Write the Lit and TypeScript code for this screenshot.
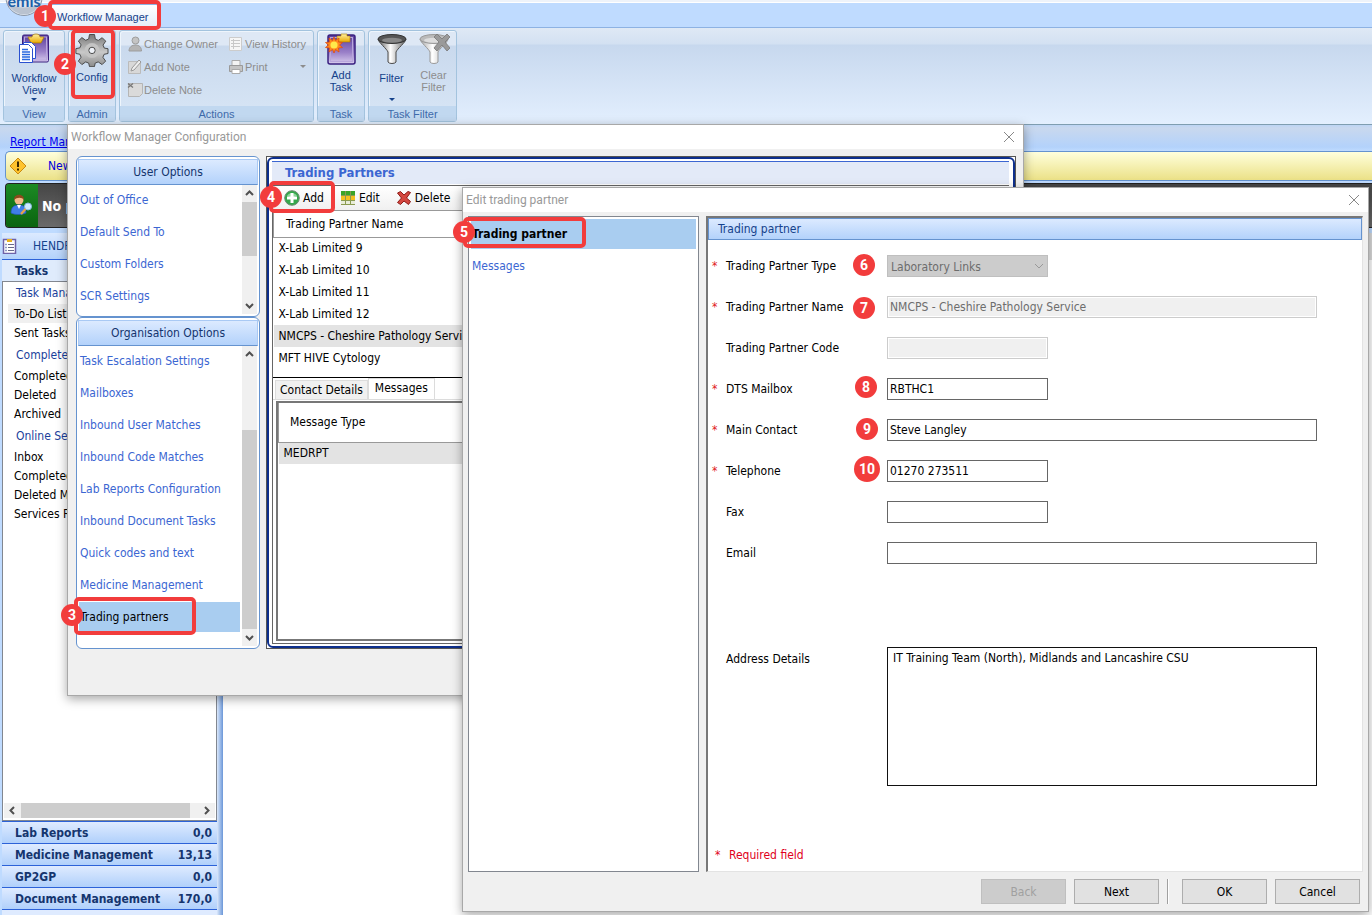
import { LitElement, html, css, svg, nothing } from "lit";
import { customElement, state } from "lit/decorators.js";
import { classMap } from "lit/directives/class-map.js";
import { styleMap } from "lit/directives/style-map.js";

type NavEntry = { text: string; heading?: boolean; selected?: boolean };
type Field = {
  id: string;
  label: string;
  value?: string;
  required?: boolean;
  wide?: boolean;
  disabled?: boolean;
  options?: string[];
};
type Callout = { n: number; x: number; y: number; box?: [number, number, number, number] };

const NAV: NavEntry[] = [
  { text: "Task Manager", heading: true },
  { text: "To-Do List", selected: true },
  { text: "Sent Tasks" },
  { text: "Completed", heading: true },
  { text: "Completed" },
  { text: "Deleted" },
  { text: "Archived" },
  { text: "Online Serv", heading: true },
  { text: "Inbox" },
  { text: "Completed" },
  { text: "Deleted Ma" },
  { text: "Services Rx" },
];

const MODULES: [string, string][] = [
  ["Lab Reports", "0,0"],
  ["Medicine Management", "13,13"],
  ["GP2GP", "0,0"],
  ["Document Management", "170,0"],
];

const USER_OPTIONS = ["Out of Office", "Default Send To", "Custom Folders", "SCR Settings"];
const ORG_OPTIONS = [
  "Task Escalation Settings",
  "Mailboxes",
  "Inbound User Matches",
  "Inbound Code Matches",
  "Lab Reports Configuration",
  "Inbound Document Tasks",
  "Quick codes and text",
  "Medicine Management",
  "Trading partners",
];

const PARTNERS = [
  "X-Lab Limited 9",
  "X-Lab Limited 10",
  "X-Lab Limited 11",
  "X-Lab Limited 12",
  "NMCPS - Cheshire Pathology Service",
  "MFT HIVE Cytology",
];

const FIELDS: Field[] = [
  { id: "type", label: "Trading Partner Type", required: true, disabled: true, options: ["Laboratory Links"] },
  { id: "name", label: "Trading Partner Name", required: true, disabled: true, wide: true, value: "NMCPS - Cheshire Pathology Service" },
  { id: "code", label: "Trading Partner Code", disabled: true },
  { id: "dts", label: "DTS Mailbox", required: true, value: "RBTHC1" },
  { id: "contact", label: "Main Contact", required: true, wide: true, value: "Steve Langley" },
  { id: "phone", label: "Telephone", required: true, value: "01270 273511" },
  { id: "fax", label: "Fax" },
  { id: "email", label: "Email", wide: true },
];

const CALLOUTS: Callout[] = [
  { n: 1, x: 45, y: 16, box: [48, 0, 113, 30] },
  { n: 2, x: 65, y: 64, box: [71, 29, 44, 70] },
  { n: 3, x: 72, y: 615, box: [74, 597, 122, 38] },
  { n: 4, x: 271, y: 197, box: [269, 181, 66, 32] },
  { n: 5, x: 464, y: 232, box: [463, 217, 123, 31] },
  { n: 6, x: 864, y: 265 },
  { n: 7, x: 864, y: 308 },
  { n: 8, x: 866, y: 387 },
  { n: 9, x: 867, y: 429 },
  { n: 10, x: 867, y: 469 },
];

const icon = (size: number, body: unknown) =>
  html`<svg class="icon" width=${size} height=${size} viewBox="0 0 ${size} ${size}" aria-hidden="true">${body}</svg>`;

const clipboard = svg`
  <linearGradient id="purple" x1="0" y1="0" x2="0" y2="1">
    <stop offset="0" stop-color="#5a3c9c"/><stop offset=".6" stop-color="#9a80c8"/><stop offset="1" stop-color="#d9cdee"/>
  </linearGradient>
  <linearGradient id="gold" x1="0" y1="0" x2="0" y2="1">
    <stop offset="0" stop-color="#fff0a0"/><stop offset="1" stop-color="#e8a800"/>
  </linearGradient>`;

const workflowIcon = icon(32, svg`${clipboard}
  <rect x="4.500" y="2" width="26" height="27" rx="1.500" fill="url(#purple)" stroke="#3a2080"/>
  <rect x="6.500" y="4" width="22" height="23" fill="none" stroke="#b8a6dc"/>
  <path d="M10 4h4c0-4 8-4 8 0h4l-3 6h-10z" fill="url(#gold)" stroke="#a87800" stroke-width=".7"/>
  <path d="M5.500 9.500h8l4 4v12h-12z" fill="#fff" stroke="#2a50d0"/>
  <path d="M1.500 11.500h9l4 4v14h-13z" fill="#fff" stroke="#2a50d0"/>
  <path d="M4 16.500h6M4 19h8M4 21.500h8M4 24h8M4 26.500h8" stroke="#2a6ae0" stroke-width="1.300"/>`);

const gearIcon = icon(34, svg`
  <linearGradient id="steel" x1="0" y1="0" x2="0" y2="1">
    <stop offset="0" stop-color="#777"/><stop offset=".55" stop-color="#c9c9c9"/><stop offset="1" stop-color="#8a8a8a"/>
  </linearGradient>
  <g fill="url(#steel)" stroke="#4c4c4c" stroke-width="1">
    <path fill-rule="evenodd" d="M14.500 1.500h5l.8 4.600 3 1.300 3.900-2.700 3.500 3.500-2.700 3.900 1.300 3 3.700.6v4.800l-3.900.8-1.200 3 2.700 3.800-3.500 3.500-3.900-2.700-3 1.200-.8 3.600h-4.900l-.8-3.600-3-1.200-3.800 2.700-3.500-3.500 2.700-3.900-1.300-3-3.900-.7v-4.900l3.900-.7 1.300-3-2.700-3.900 3.500-3.400 3.800 2.700 3-1.300zM17 11.200a6.200 6.200 0 1 0 0 12.400 6.200 6.200 0 0 0 0-12.400z"/>
    <circle cx="17" cy="17.400" r="7.400" fill="#c4c4c4" stroke="none"/>
    <circle cx="17" cy="17.400" r="3.200" fill="#eef2f8"/>
  </g>`);

const addTaskIcon = icon(32, svg`${clipboard}
  <rect x="3" y="2" width="27" height="29" rx="2" fill="url(#purple)" stroke="#3a2080" stroke-width="1.500"/>
  <rect x="5.500" y="4.500" width="22" height="24" fill="none" stroke="#b8a6dc"/>
  <path d="M12 3h4V1h6v2h3v6H12z" fill="url(#gold)" stroke="#a87800" stroke-width=".6"/>
  <path d="M9 4l1.500 3.500L14 5l-.5 4 4 .5-3 2.500 3 2.500-4 .5.5 4-3.500-2.500L9 20l-1.500-3.500L4 19l.5-4-4-.5 3-2.500-3-2.500 4-.5L4 5l3.500 2.500z" fill="#ff8a1c" stroke="#e04a10" stroke-width=".8"/>
  <circle cx="9" cy="12" r="3.600" fill="#ffe94a"/>`);

const funnel = (faded: boolean) => svg`
  <linearGradient id=${faded ? "fun2" : "fun1"} x1="0" y1="0" x2="1" y2="0">
    <stop offset="0" stop-color=${faded ? "#a8a8a8" : "#555"}/><stop offset=".45" stop-color="#fff"/><stop offset="1" stop-color=${faded ? "#a8a8a8" : "#666"}/>
  </linearGradient>
  <path d="M2 6c0 3 9 10 10 13v10c1 2 7 2 8 0V19c1-3 10-10 10-13z" fill=${faded ? "url(#fun2)" : "url(#fun1)"} stroke=${faded ? "#999" : "#4a4a4a"}/>
  <ellipse cx="16" cy="6" rx="14" ry="4.500" fill=${faded ? "#bbb" : "#555"} stroke=${faded ? "#999" : "#333"}/>
  <ellipse cx="16" cy="7.200" rx="10" ry="2.500" fill=${faded ? "#ddd" : "#888"}/>`;

const filterIcon = icon(32, funnel(false));
const clearFilterIcon = icon(32, svg`${funnel(true)}
  <path d="M16 4l3-3 5 5 5-5 3 3-5 5 5 6-3 3-5-6-5 6-3-3 5-6z" fill="#9a9a9a" stroke="#777" stroke-width=".8"/>`);

const personIcon = icon(16, svg`<circle cx="8.500" cy="4.500" r="3.500" fill="#c4c4c4" stroke="#9d9d9d"/>
  <path d="M2 15c0-4 3-6 6.500-6s6 2 6 6z" fill="#b4b4b4" stroke="#9d9d9d"/>`);
const noteIcon = icon(16, svg`<path d="M1.500 2.500h12v12h-12z" fill="#d8d8d8" stroke="#bbb"/>
  <path d="M4 12l1-3 7-8 2 2-7 8z" fill="#eee" stroke="#999"/>`);
const deleteNoteIcon = icon(16, svg`<path d="M1.500 1.500h14v10l-3 3h-11z" fill="#dadada" stroke="#b5b5b5"/>
  <path d="M1 1.500l5 4M6 1.500L1 5.500" stroke="#777" stroke-width="1.300"/>`);
const historyIcon = icon(16, svg`<path d="M1.500 1.500h12v13h-12z" fill="#f6f6f6" stroke="#ccc"/>
  <path d="M3 4.500h9M3 7.500h9M3 10.500h9M5.500 3v10" stroke="#c8c8c8"/>`);
const printIcon = icon(16, svg`<path d="M4 1.500h8v5H4z" fill="#f4f4f4" stroke="#aaa"/>
  <path d="M1.500 6.500h13v6h-13z" fill="#c4c4c4" stroke="#9a9a9a"/>
  <path d="M4 10.500h8v4H4z" fill="#fff" stroke="#aaa"/>`);

const warnIcon = icon(18, svg`<path d="M9 1l8 8-8 8-8-8z" fill="#ffc32c" stroke="#c98a10"/>
  <path d="M9 4.500v5.500M9 11.500v2" stroke="#3a2a00" stroke-width="2"/>`);
const patientIcon = icon(24, svg`<circle cx="9" cy="6" r="4.500" fill="#f3b98a"/>
  <path d="M4 6c-.5-7 10.500-7 10 0-2-3-7-3-10 0z" fill="#8a4a1c"/>
  <path d="M1 19c0-6 3-8 8-8s7 2 7 8c-4 2-11 2-15 0z" fill="#3f7ee8" stroke="#2456b8" stroke-width=".7"/>
  <path d="M7 11l2 4 2-4z" fill="#fff"/>
  <circle cx="18" cy="12.500" r="3.500" fill="#cfeaff" stroke="#8abbe8"/>
  <path d="M15.500 15L11 20" stroke="#e8a24a" stroke-width="2.200"/>`);
const listIcon = icon(16, svg`<rect x="1.500" y="1.500" width="12" height="14" fill="#fff" stroke="#6e62a8" stroke-width="1.500"/>
  <path d="M5 1h5v3H5z" fill="#e9b320"/>
  <path d="M6 6.500h6M6 9.500h6M6 12.500h6" stroke="#6a6a8a"/><path d="M3.500 6.500h1M3.500 9.500h1M3.500 12.500h1" stroke="#223a90" stroke-width="1.500"/>`);

const addIcon = icon(16, svg`<circle cx="8" cy="8" r="7.300" fill="#35a84b" stroke="#6a8a70"/>
  <path d="M3 5.500a6 5 0 0 1 10 0c-3 2-7 2-10 0z" fill="#8fd69b"/>
  <path d="M6.500 3h3v3.500H13v3H9.500V13h-3V9.500H3v-3h3.500z" fill="#fff"/>`);
const editIcon = icon(16, svg`<path d="M1 1h14v4H1z" fill="#3aa428"/><path d="M1 6h14v4H1z" fill="#f4c020"/>
  <path d="M1 10h14v5H1z" fill="#e8ecd8"/><path d="M1 5.500h14M1 10.500h14M1 14.500h14M5.500 1v14M10.500 1v14" stroke="#8a9a50"/>`);
const deleteIcon = icon(16, svg`<path d="M1.500 3l3-1.500L8 5l4-3.500 2.500 1L10.500 8l4 3.500-2 3L8 11l-3.500 3.500-3-2L5.500 8z" fill="#d4473f" stroke="#8e1a16"/>`);

const chevron = (dir: "up" | "down" | "left" | "right") => {
  const d = { up: "M2 7l3.500-3.500L9 7", down: "M2 4l3.500 3.500L9 4", left: "M7 2L3.500 5.500 7 9", right: "M4 2l3.500 3.500L4 9" }[dir];
  return html`<svg class="chev" width="11" height="11" viewBox="0 0 11 11" aria-hidden="true"><path d=${d} fill="none" stroke="#505050" stroke-width="2"/></svg>`;
};
const closeGlyph = svg`<svg width="12" height="12" viewBox="0 0 12 12" aria-hidden="true"><path d="M1 1l10 10M11 1L1 11" stroke="#888" stroke-width="1"/></svg>`;

@customElement("app-root")
export class AppRoot extends LitElement {
  @state() private orgOption = "Trading partners";
  @state() private partner = 4;

  static styles = css`
    :host {
      display: block;
      position: relative;
      height: 100vh;
      overflow: hidden;
      background: #bfdbff;
      font: 12px/16px "DejaVu Sans Condensed", "DejaVu Sans", sans-serif;
      color: #000;
    }
    * { box-sizing: border-box; }
    button, input, select, textarea { font: inherit; color: inherit; margin: 0; }
    button { border: 0; background: none; padding: 0; text-align: left; }
    ul { list-style: none; margin: 0; padding: 0; }
    h1, h2 { margin: 0; font: inherit; }
    svg { display: block; flex: none; }
    .grow { flex: 1; min-width: 0; }

    .desktop { display: flex; flex-direction: column; height: 100%; }

    /* ribbon */
    .tabs {
      position: relative; flex: none; height: 28px; padding: 4px 0 0 50px;
      background: linear-gradient(#eef3fa 0 2px, #fff 2px 3px, #bfdbff 3px);
      border-bottom: 1px solid #8db2e3;
    }
    .tab {
      display: block; height: 24px; padding: 0 9px 0 6px; color: #15428b; font: 11px/24px "Liberation Sans", sans-serif;
      background: linear-gradient(#fff, #e3ecf8); border: 1px solid #8db2e3; border-bottom: 0; border-radius: 3px 3px 0 0;
    }
    .orb { position: absolute; left: 5px; top: -21px; }
    .ribbon {
      flex: none; display: flex; gap: 3px; height: 97px; padding: 2px 3px; font: 11px/12px "Liberation Sans", sans-serif; color: #15428b;
      background: linear-gradient(#dfe9f5 0, #d3e1f2 16px, #c7d8ee 17px, #e3effe 96px);
      border-bottom: 1px solid #7f9db0;
    }
    .group {
      display: flex; flex-direction: column; border: 1px solid #a3c3de; border-radius: 3px;
      background: linear-gradient(#dee8f5 0 14px, #c9d9ed 15px, #d8e6f6);
      box-shadow: inset 1px 1px 0 #eef5fc;
    }
    .group > footer { height: 15px; line-height: 16px; text-align: center; color: #3e6aaa; background: #c1d8f0; }
    .group .body { flex: 1; display: flex; justify-content: center; }
    .view { width: 62px; } .admin { width: 48px; } .actions { width: 195px; } .task { width: 48px; } .filters { width: 89px; }
    .big { display: flex; flex-direction: column; align-items: center; width: 42px; padding-top: 2px; text-align: center; }
    .view .big { width: 60px; }
    .big .cap { padding-top: 4px; }
    .big.drop .cap { padding-top: 7px; min-height: 31px; }
    .arrow { width: 0; height: 0; border: 3px solid transparent; border-top-color: currentColor; border-bottom: 0; margin-top: 2px; }
    .off { color: #8d8d8d; }
    .actions .body { display: grid; grid-template-columns: 101px 1fr; grid-auto-rows: 23px; padding: 1px 8px; }
    .small { display: flex; align-items: center; gap: 1px; white-space: nowrap; }
    .small .arrow { margin: 0 0 0 auto; }

    /* strips under the ribbon */
    .crumbs { flex: none; height: 26px; padding: 9px 10px 0; background: linear-gradient(#bcd4f4, #c9d8ee 3px, #b3d2fb 22px, #bfdbff); }
    .crumbs a { color: #0000f0; }
    .alert {
      flex: none; height: 30px; margin-left: 5px; padding-left: 3px; display: flex; align-items: center; gap: 21px; color: #0000e0;
      border: 1px solid #6593cf; border-right: 0; border-radius: 5px 0 0 5px; background: linear-gradient(#ffffdc, #ebe187);
    }
    .patient {
      flex: none; height: 45px; margin: 2px 0 5px 5px; display: flex; color: #fff; font-size: 14px; font-weight: 700;
      border: 1px solid #222; border-right: 0; border-radius: 4px 0 0 4px; overflow: hidden; background: linear-gradient(#464646, #6a6a6a);
    }
    .patient .tile { display: grid; place-items: center; width: 32px; background: linear-gradient(#1c8a24, #0a6410); }
    .patient .name { padding: 14px 4px; }

    .work { flex: 1; min-height: 0; display: flex; padding-left: 2px; }
    .side { width: 215px; display: flex; flex-direction: column; }
    .who { flex: none; display: flex; align-items: center; gap: 15px; height: 27px; color: #15428b; background: linear-gradient(#dceaff, #b3d2fb); border-bottom: 1px solid #2c62d8; }
    .tasks { flex: none; height: 21px; padding-left: 13px; font-weight: 700; line-height: 22px; color: #15356e; background: #dfebfc; }
    .tree { flex: 1; min-height: 0; display: flex; flex-direction: column; border: 1px solid #828790; background: #fff; }
    .tree li { height: 19px; line-height: 20px; padding-left: 6px; margin-left: 5px; white-space: nowrap; }
    .tree li.heading { height: 22px; line-height: 22px; margin-top: 2px; padding-left: 8px; color: #1a3f9c; }
    .tree li.heading:first-child { margin-top: 0; }
    .tree li.selected { background: #f0f0f0; }
    .hbar { display: flex; align-items: center; height: 15px; margin: 0 1px 2px; background: #f0f0f0; }
    .hbar .chev { margin: 0 3px; }
    .hbar .thumb { width: 169px; height: 15px; background: #cdcdcd; margin-right: auto; }
    .module {
      flex: none; display: flex; justify-content: space-between; width: 100%; height: 22px; padding: 0 5px 0 13px; line-height: 22px; font-weight: 700;
      color: #15356e; border-top: 1px solid #2c62d8; background: linear-gradient(#dfebff, #b0d0fb);
    }
    .more { flex: none; height: 6px; border-top: 1px solid #2c62d8; background: #dfebff; }
    .split { width: 6px; background: linear-gradient(90deg, #dbe8fb, #6b97d8); }
    .content { background: #fff; border-top: 27px solid #dcdcdc; }

    /* dialogs */
    .dialog { position: absolute; display: flex; flex-direction: column; background: #f0f0f0; border: 1px solid #a8a8a8; box-shadow: 0 3px 10px rgba(0, 0, 0, .35); }
    .config { left: 67px; top: 124px; right: 348px; height: 572px; }
    .edit { inset: 187px 3px 3px 462px; }
    .title {
      flex: none; height: 24px; padding: 0 8px 0 3px; display: flex; align-items: center; justify-content: space-between;
      background: #fff; color: #999; font-family: Roboto, sans-serif;
    }
    .config-body { display: flex; gap: 6px; height: 493px; margin: 7px 7px 0 8px; }
    .options { width: 184px; display: flex; flex-direction: column; }
    .box { display: flex; flex-direction: column; padding: 2px 1px; border: 1px solid #6593cf; border-radius: 6px; background: #fff; }
    .box.user { height: 161px; }
    .box.org { flex: 1; min-height: 0; }
    .box h2 { flex: none; height: 26px; line-height: 25px; text-align: center; color: #15356e; background: linear-gradient(#dceaff, #b3d2fb); border: 1px solid #a9c9f4; border-bottom-color: #6593cf; }
    .box .scroll { flex: 1; min-height: 0; display: flex; overflow: hidden; }
    .box ul { flex: 1; display: flex; flex-direction: column; gap: 2px; padding: 0 2px 0 1px; }
    .opt { display: block; width: 100%; height: 30px; line-height: 30px; padding-left: 1px; color: #3b66d2; white-space: nowrap; }
    .opt.on { color: #000; background: #a9cdf0; }
    .vbar { display: flex; flex-direction: column; align-items: center; width: 15px; margin-right: 1px; background: #f0f0f0; }
    .vbar .chev { margin: 3px 0; }
    .vbar .thumb { width: 15px; background: #cdcdcd; }

    .panel { display: flex; flex-direction: column; border: 1px solid #555; background: #fff; }
    .panel .inner { flex: 1; display: flex; flex-direction: column; padding: 2px 4px 2px 3px; border: 2px solid #0e2f8c; border-radius: 6px; }
    .panel h2 { height: 23px; line-height: 22px; padding-left: 13px; font-size: 13px; font-weight: 700; color: #3b66d2; background: #e3eaf8; border-top: 1px solid #3b66d2; }
    .sheet { flex: 1; display: flex; flex-direction: column; margin-top: 1px; border: 1px solid #666; border-right: 0; }
    .tools { display: flex; gap: 16px; height: 25px; padding-left: 11px; background: linear-gradient(#fff, #f0f0f0); border-bottom: 1px solid #999; }
    .tool { display: flex; align-items: center; gap: 3px; }
    table { border-collapse: collapse; width: 100%; }
    th { font-weight: 400; text-align: left; border: 1px solid #999; border-top: 0; }
    td { height: 22px; padding: 0 5px; }
    tr.on td { background: #e3e3e3; }
    .partners { flex: none; height: 167px; border-bottom: 1px solid #000; }
    .partners th { height: 26px; padding: 0 12px; }
    .tabrow { display: flex; align-items: flex-end; height: 22px; padding-left: 2px; border-bottom: 1px solid #dcdcdc; }
    .subtab { height: 19px; padding: 0 4px; border: 1px solid #dcdcdc; border-bottom: 0; background: #f0f0f0; }
    .subtab.on { height: 21px; padding: 0 6px 3px; background: #fff; }
    .messages { flex: 1; margin: 1px 0 2px 3px; border: 2px solid #777; border-right: 0; }
    .messages th { height: 39px; padding: 0 11px; }

    .edit-body { flex: 1; min-height: 0; display: flex; gap: 7px; padding: 4px 5px 0; }
    .steps { width: 231px; padding: 2px; background: #fff; border: 1px solid #828790; }
    .step { display: block; width: 100%; height: 30px; line-height: 30px; margin-bottom: 2px; padding-left: 1px; color: #3b66d2; }
    .step.on { color: #000; font-weight: 700; background: #a9cdf0; }
    .form { display: flex; flex-direction: column; background: #fff; border: 2px solid #777; border-right: 1px solid #e3e3e3; border-bottom: 1px solid #e3e3e3; }
    .form h2 { height: 22px; line-height: 20px; padding-left: 9px; color: #15428b; border: 1px solid #6593cf; background: linear-gradient(#dceaff, #b3d2fb); }
    .fields { flex: 1; padding: 15px 45px 0 4px; display: flex; flex-direction: column; gap: 19px; }
    .row { display: flex; line-height: 22px; }
    .star { width: 14px; color: #e02020; }
    .row label { width: 161px; }
    .row input, .row select { width: 161px; height: 22px; padding: 0 2px; border: 1px solid #666; border-radius: 0; background: #fff; outline: 0; }
    .row input.wide { flex: 1; }
    .row input:disabled { color: #6d6d6d; background: #f0f0f0; border-color: #ccc; box-shadow: inset 0 0 0 1px #fff; }
    .pick { display: flex; position: relative; }
    .row select:disabled { appearance: none; opacity: 1; color: #6d6d6d; background: #ccc; border-color: #bfbfbf; padding: 0 3px; }
    .pick svg { position: absolute; right: 4px; top: 8px; }
    .address { margin-top: 64px; }
    .address label { padding-top: 1px; }
    textarea { flex: 1; height: 139px; padding: 2px 5px; line-height: 16px; border: 1px solid #111; border-radius: 0; background: #fff; resize: none; outline: 0; }
    .note { padding: 0 7px 8px; color: #e00020; }
    .note span { display: inline-block; width: 14px; }
    .buttons { flex: none; display: flex; justify-content: flex-end; gap: 8px; padding: 7px 8px; }
    .btn { width: 85px; height: 25px; text-align: center; background: #e1e1e1; border: 1px solid #adadad; }
    .btn:disabled { color: #a0a0a0; background: #ccc; border-color: #bfbfbf; }
    .rule { width: 2px; margin-right: 5px; border-left: 1px solid #a0a0a0; background: #fff; }

    /* numbered callouts lying over the windows */
    .callouts { position: absolute; inset: 0; pointer-events: none; }
    .frame { position: absolute; border: 4px solid #f23c3c; border-radius: 5px; }
    .pin {
      position: absolute; width: 22px; height: 22px; border-radius: 50%; transform: translate(-50%, -50%);
      background: #f23c3c; color: #fff; text-align: center; font: 700 14px/22px Roboto, sans-serif;
    }
    .pin.large { width: 26px; height: 26px; line-height: 26px; }
  `;

  private ribbon() {
    return html`
      <div class="tabs">
        <svg class="orb" width="38" height="38" viewBox="0 0 38 38" role="img" aria-label="emis">
          <circle cx="19" cy="18.500" r="18" fill="#dfe6ef" stroke="#8b97a8"/>
          <path d="M3 24a17 17 0 0 0 32 0c-9 6-23 6-32 0z" fill="#b9c2cf"/>
          <text x="19" y="28" text-anchor="middle" font-family="Lato, sans-serif" font-weight="700" font-size="16" fill="#1c5fa8">emis</text>
        </svg>
        <button class="tab">Workflow Manager</button>
      </div>
      <div class="ribbon">
        <section class="group view">
          <div class="body"><button class="big drop">${workflowIcon}<span class="cap">Workflow<br>View</span><i class="arrow"></i></button></div>
          <footer>View</footer>
        </section>
        <section class="group admin">
          <div class="body"><button class="big">${gearIcon}<span class="cap">Config</span></button></div>
          <footer>Admin</footer>
        </section>
        <section class="group actions">
          <div class="body">
            <button class="small off">${personIcon}Change Owner</button>
            <button class="small off">${historyIcon}View History</button>
            <button class="small off">${noteIcon}Add Note</button>
            <button class="small off">${printIcon}Print<i class="arrow"></i></button>
            <button class="small off">${deleteNoteIcon}Delete Note</button>
          </div>
          <footer>Actions</footer>
        </section>
        <section class="group task">
          <div class="body"><button class="big">${addTaskIcon}<span class="cap">Add<br>Task</span></button></div>
          <footer>Task</footer>
        </section>
        <section class="group filters">
          <div class="body">
            <button class="big drop">${filterIcon}<span class="cap">Filter</span><i class="arrow"></i></button>
            <button class="big off">${clearFilterIcon}<span class="cap">Clear<br>Filter</span></button>
          </div>
          <footer>Task Filter</footer>
        </section>
      </div>`;
  }

  private sidebar() {
    return html`
      <aside class="side">
        <div class="who">${listIcon}HENDR</div>
        <div class="tasks">Tasks</div>
        <div class="tree">
          <ul class="grow">
            ${NAV.map((n) => html`<li class=${classMap({ heading: !!n.heading, selected: !!n.selected })}>${n.text}</li>`)}
          </ul>
          <div class="hbar">${chevron("left")}<span class="thumb"></span>${chevron("right")}</div>
        </div>
        ${MODULES.map(([name, count]) => html`<button class="module"><span>${name}</span><span>${count}</span></button>`)}
        <div class="more"></div>
      </aside>`;
  }

  private optionBox(kind: string, title: string, items: string[], before: number, thumb: number) {
    return html`
      <section class="box ${kind}">
        <h2>${title}</h2>
        <div class="scroll">
          <ul>
            ${items.map((t) => html`<li><button class=${classMap({ opt: true, on: t === this.orgOption })} @click=${() => (this.orgOption = t)}>${t}</button></li>`)}
          </ul>
          <div class="vbar">
            ${chevron("up")}
            <span style=${styleMap({ flexGrow: String(before) })}></span>
            <span class="thumb" style=${styleMap({ flexGrow: String(thumb) })}></span>
            <span style=${styleMap({ flexGrow: String(100 - before - thumb) })}></span>
            ${chevron("down")}
          </div>
        </div>
      </section>`;
  }

  private configDialog() {
    return html`
      <section class="dialog config" role="dialog" aria-label="Workflow Manager Configuration">
        <header class="title"><span>Workflow Manager Configuration</span><button aria-label="Close">${closeGlyph}</button></header>
        <div class="config-body">
          <div class="options">
            ${this.optionBox("user", "User Options", USER_OPTIONS, 0, 57)}
            ${this.optionBox("org", "Organisation Options", ORG_OPTIONS, 25, 75)}
          </div>
          <div class="panel grow">
            <div class="inner">
              <h2>Trading Partners</h2>
              <div class="sheet">
                <div class="tools">
                  <button class="tool">${addIcon}Add</button>
                  <button class="tool">${editIcon}Edit</button>
                  <button class="tool">${deleteIcon}Delete</button>
                </div>
                <div class="partners">
                  <table>
                    <thead><tr><th>Trading Partner Name</th></tr></thead>
                    <tbody>
                      ${PARTNERS.map((p, i) => html`<tr class=${i === this.partner ? "on" : ""} @click=${() => (this.partner = i)}><td>${p}</td></tr>`)}
                    </tbody>
                  </table>
                </div>
                <div class="tabrow">
                  <button class="subtab">Contact Details</button>
                  <button class="subtab on">Messages</button>
                </div>
                <div class="messages">
                  <table>
                    <thead><tr><th>Message Type</th></tr></thead>
                    <tbody><tr class="on"><td>MEDRPT</td></tr></tbody>
                  </table>
                </div>
              </div>
            </div>
          </div>
        </div>
      </section>`;
  }

  private field(f: Field) {
    return html`
      <div class="row">
        <span class="star">${f.required ? "*" : nothing}</span>
        <label for=${f.id}>${f.label}</label>
        ${f.options
          ? html`<span class="pick">
              <select id=${f.id} ?disabled=${f.disabled}>${f.options.map((o) => html`<option>${o}</option>`)}</select>
              <svg width="10" height="7" viewBox="0 0 10 7" aria-hidden="true"><path d="M1 1l4 4 4-4" fill="none" stroke="#999"/></svg>
            </span>`
          : html`<input id=${f.id} type="text" class=${f.wide ? "wide" : ""} .value=${f.value ?? ""} ?disabled=${f.disabled}>`}
      </div>`;
  }

  private editDialog() {
    return html`
      <section class="dialog edit" role="dialog" aria-label="Edit trading partner">
        <header class="title"><span>Edit trading partner</span><button aria-label="Close">${closeGlyph}</button></header>
        <div class="edit-body">
          <nav class="steps">
            <button class="step on">Trading partner</button>
            <button class="step">Messages</button>
          </nav>
          <form class="form grow" @submit=${(e: Event) => e.preventDefault()}>
            <h2>Trading partner</h2>
            <div class="fields">
              ${FIELDS.map((f) => this.field(f))}
              <div class="row address">
                <span class="star"></span>
                <label for="address">Address Details</label>
                <textarea id="address" .value=${"IT Training Team (North), Midlands and Lancashire CSU"}></textarea>
              </div>
            </div>
            <div class="note"><span>*</span>Required field</div>
          </form>
        </div>
        <footer class="buttons">
          <button class="btn" disabled>Back</button>
          <button class="btn">Next</button>
          <span class="rule"></span>
          <button class="btn">OK</button>
          <button class="btn">Cancel</button>
        </footer>
      </section>`;
  }

  render() {
    return html`
      <div class="desktop">
        ${this.ribbon()}
        <div class="crumbs"><a href="#">Report Man</a></div>
        <div class="alert">${warnIcon}<span>New</span></div>
        <div class="patient"><span class="tile">${patientIcon}</span><span class="name">No p</span></div>
        <div class="work">
          ${this.sidebar()}
          <div class="split"></div>
          <main class="content grow"></main>
        </div>
      </div>
      ${this.configDialog()} ${this.editDialog()}
      <div class="callouts">
        ${CALLOUTS.map(({ n, x, y, box }) => html`
          ${box ? html`<div class="frame" style=${styleMap({ left: `${box[0]}px`, top: `${box[1]}px`, width: `${box[2]}px`, height: `${box[3]}px` })}></div>` : nothing}
          <div class=${classMap({ pin: true, large: n > 9 })} style=${styleMap({ left: `${x}px`, top: `${y}px` })}>${n}</div>`)}
      </div>`;
  }
}
